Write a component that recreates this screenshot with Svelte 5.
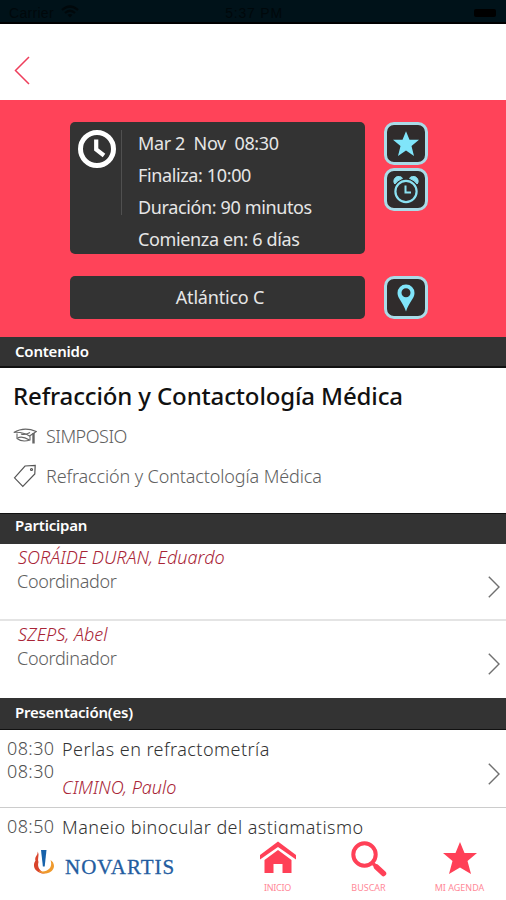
<script>
  // Session times shown next to the clock
  const schedule = ['Mar 2  Nov  08:30', 'Finaliza: 10:00', 'Duración: 90 minutos', 'Comienza en: 6 días'];
  const room = 'Atlántico C';

  const session = {
    title: 'Refracción y Contactología Médica',
    type: 'SIMPOSIO',
    topic: 'Refracción y Contactología Médica'
  };

  const people = [
    { name: 'SORÁIDE DURAN, Eduardo', role: 'Coordinador' },
    { name: 'SZEPS, Abel', role: 'Coordinador' }
  ];

  const talks = [
    { start: '08:30', end: '08:30', title: 'Perlas en refractometría', speaker: 'CIMINO, Paulo' },
    { start: '08:50', end: '', title: 'Manejo binocular del astigmatismo', speaker: '' }
  ];

  let favorite = $state(false);
</script>

{#snippet chevron()}
  <svg class="chevron" width="12" height="22" viewBox="0 0 12 22">
    <path d="M.8 .8 11 11 .8 21.2" fill="none" stroke="#707070" stroke-width="1.400" />
  </svg>
{/snippet}

<div class="app">
  <div class="status">
    <span class="carrier">
      Carrier
      <svg width="18" height="13" viewBox="0 0 18 13" fill="none" stroke="#00080b" stroke-width="2.300">
        <path d="M1 5Q9-2 17 5M4 8Q9 3.500 14 8" />
        <path d="M9 12.500 6.500 9.800Q9 8 11.500 9.800Z" fill="#00080b" stroke="none" />
      </svg>
    </span>
    <span class="clock">5:37 PM</span>
    <span class="battery"><i></i></span>
  </div>

  <header>
    <button class="back" aria-label="Volver">
      <svg width="16" height="29" viewBox="0 0 16 29">
        <path d="M15 1 1.500 14.500 15 28" fill="none" stroke="#ee3f5c" stroke-width="1.500" />
      </svg>
    </button>
  </header>

  <section class="hero">
    <div class="hero-row">
      <div class="card times">
        <svg width="38" height="38" viewBox="0 0 38 38" fill="none" stroke="#fff">
          <circle cx="19" cy="19" r="16.500" stroke-width="5" />
          <path d="M18.200 9.500V19.500L26 25.500" stroke-width="4.200" />
        </svg>
        <div class="divider"></div>
        <div class="lines">
          {#each schedule as line}
            <p>{line}</p>
          {/each}
        </div>
      </div>
      <div class="actions">
        <button class="tile" aria-label="Favorito" onclick={() => (favorite = !favorite)}>
          <svg width="26" height="26" viewBox="0 0 26 26">
            <path d="M13 .3 16.500 8.800H26L18.500 15 21 25 13 19.600 5 25 7.500 15 0 8.800H9.500Z" fill="#80e5fa" />
          </svg>
        </button>
        <button class="tile" aria-label="Alarma">
          <svg width="26" height="28" viewBox="0 0 26 28" fill="none" stroke="#8be2f2">
            <circle cx="13" cy="15.500" r="10.600" stroke-width="2.200" />
            <path d="M12.500 9.500V16.500H18" stroke-width="2" />
            <path d="M1.800 8A4.700 4.700 0 0 1 9.500 2.300Q4.500 4.300 1.800 8ZM24.200 8A4.700 4.700 0 0 0 16.500 2.300Q21.500 4.300 24.200 8Z" fill="#8be2f2" />
          </svg>
        </button>
      </div>
    </div>
    <div class="hero-row">
      <div class="card room">{room}</div>
      <button class="tile" aria-label="Ubicación">
        <svg width="18" height="28" viewBox="0 0 18 28">
          <path d="M9 .5A8.300 8.300 0 0 0 .5 9C.5 14.500 6 18 9 27.500 12 18 17.500 14.500 17.500 9A8.300 8.300 0 0 0 9 .5ZM9 4.300A4.500 4.500 0 1 1 9 13.300 4.500 4.500 0 1 1 9 4.300Z" fill="#80e5fa" fill-rule="evenodd" />
        </svg>
      </button>
    </div>
  </section>

  <h2 class="first">Contenido</h2>
  <section class="content">
    <h1>{session.title}</h1>
    <p class="type">
      <svg width="24" height="18" viewBox="0 0 24 18" fill="none" stroke="#666" stroke-width="1.100">
        <path d="M.8 5.500Q11-.8 23.300 4.500L16.500 9Q9 4.500 .8 5.500ZM4 6.500V11.500Q9 15.500 17 13V9" />
        <path d="M8 7Q12 8.500 17 5.500M4.500 11Q9 8.500 16.500 13" />
        <path d="M20.500 6V16.500" stroke-width="2.400" />
      </svg>
      <span>{session.type}</span>
    </p>
    <p class="topic">
      <svg width="24" height="24" viewBox="0 0 24 24" fill="none" stroke="#555" stroke-width="1.200">
        <path d="M1.500 13.800 12 2 22.200 1.500 21.800 10 9.800 22.500Z" />
        <circle cx="18.500" cy="5.500" r="1" />
      </svg>
      <span>{session.topic}</span>
    </p>
  </section>

  <h2 class="second">Participan</h2>
  <section>
    {#each people as person}
      <div class="person">
        <div>
          <p class="name">{person.name}</p>
          <p class="role">{person.role}</p>
        </div>
        {@render chevron()}
      </div>
    {/each}
  </section>

  <h2 class="third">Presentación(es)</h2>
  <section class="talks">
    {#each talks as talk}
      <div class="talk">
        <div class="hours">
          <p>{talk.start}</p>
          <p>{talk.end}</p>
        </div>
        <div class="info">
          <p class="title">{talk.title}</p>
          <p class="name">{talk.speaker}</p>
        </div>
        {@render chevron()}
      </div>
    {/each}
  </section>

  <footer>
    <div class="sponsor">
      <svg width="22" height="24" viewBox="0 0 22 24">
        <path d="M4.500 1.500C5.500 5 1 6.500 2.500 10.500-.5 15 .5 21 9 23.500H12C6.500 20.500 4 17 5.500 12 4 8 7 5 4.500 1.500Z" fill="#d9442c" />
        <path d="M17.500 10C22.500 13 22.500 20.500 15 23 10 24.500 7 23 5.500 20.500 9.500 22.500 13.500 21.500 16.500 18.500 18.500 16 18.500 13 17.500 10Z" fill="#ef9a2d" />
        <path d="M8 0H13.500L11.700 16.500H9.900Z" fill="#1762aa" />
      </svg>
      <span>NOVARTIS</span>
    </div>
    <nav>
      <a href="#inicio">
        <svg width="36" height="34" viewBox="0 0 36 34" fill="#ff4057">
          <path d="M18 .5 0 14V18.500L18 6 36 18.500V14Z" />
          <path d="M4.500 19 18 9 31.500 19V32H22.500V23H13.500V32H4.500Z" />
        </svg>
        <span class="inicio">INICIO</span>
      </a>
      <a href="#buscar">
        <svg width="36" height="36" viewBox="0 0 36 36" fill="none" stroke="#ff4057">
          <circle cx="13.500" cy="13.500" r="11.200" stroke-width="4" />
          <path d="M22 22.500 25 25.500" stroke-width="3.500" />
          <path d="M25.500 26 32.500 32.500" stroke-width="5.500" stroke-linecap="round" />
        </svg>
        <span>BUSCAR</span>
      </a>
      <a href="#agenda">
        <svg width="34" height="34" viewBox="0 0 34 34">
          <path d="M17 1 21.500 12H34L24.500 20 28 33 17 26.500 6 33 9.500 20 0 12H12.500Z" fill="#ff4057" />
        </svg>
        <span>MI AGENDA</span>
      </a>
    </nav>
  </footer>
</div>

<style>
  :global(body) {
    margin: 0;
    background: #fff;
  }

  .app {
    display: flex;
    flex-direction: column;
    height: 900px;
    overflow: hidden;
    background: #fff;
    font-family: "Noto Sans", sans-serif;
    font-size: 18px;
  }

  p, h1, h2 {
    margin: 0;
    white-space: pre;
  }

  button {
    padding: 0;
    border: none;
    background: none;
  }

  svg {
    display: block;
    flex: none;
  }

  .status {
    display: grid;
    grid-template-columns: 1fr auto 1fr;
    box-sizing: border-box;
    height: 24px;
    padding: 3px 10px 0 9px;
    border-bottom: 2px solid #000;
    background: #001219;
    color: #00080b;
    font: 14px/20px "Liberation Sans", sans-serif;
    letter-spacing: 0.3px;
  }

  .carrier {
    display: flex;
    gap: 7px;
  }

  .carrier svg {
    margin-top: 2px;
  }

  .clock {
    padding-left: 3px;
    letter-spacing: 0.8px;
  }

  .battery {
    justify-self: end;
    padding-top: 6px;
  }

  .battery i {
    display: block;
    width: 22px;
    height: 8px;
    border-radius: 2px;
    background: #000;
  }

  header {
    box-sizing: border-box;
    height: 76px;
    padding: 32px 14px 0;
  }

  .hero {
    display: flex;
    flex-direction: column;
    gap: 22px;
    box-sizing: border-box;
    height: 237px;
    padding: 22px 0 0 70px;
    background: #ff4359;
  }

  .hero-row {
    display: flex;
    gap: 19px;
  }

  .card {
    box-sizing: border-box;
    width: 295px;
    border-radius: 5px;
    background: #333;
    color: #e6e6e6;
  }

  .times {
    display: flex;
    height: 132px;
    padding: 8px;
  }

  .divider {
    width: 1px;
    height: 85px;
    margin: 0 16px 0 5px;
    background: #505050;
  }

  .lines {
    margin-top: -3px;
    line-height: 32px;
    letter-spacing: -0.37px;
  }

  .room {
    height: 43px;
    text-align: center;
    padding-left: 5px;
    line-height: 43px;
    letter-spacing: -0.2px;
  }

  .actions {
    display: flex;
    flex-direction: column;
    gap: 3px;
  }

  .tile {
    display: flex;
    align-items: center;
    justify-content: center;
    box-sizing: border-box;
    width: 44px;
    height: 43px;
    border: 3px solid #a9dce8;
    border-radius: 10px;
    background: #302c2c;
  }

  h2 {
    box-sizing: border-box;
    flex: none;
    padding-left: 15px;
    background: #333;
    color: #fff;
    font-size: 15px;
    font-weight: 600;
    line-height: 28px;
    letter-spacing: -0.22px;
  }

  .first {
    height: 31px;
    border-bottom: 2px solid #111;
  }

  .second {
    height: 31px;
    border-top: 1px solid #111;
    line-height: 23px;
  }

  .third {
    height: 32px;
    border-bottom: 1px solid #111;
  }

  .content {
    box-sizing: border-box;
    height: 145px;
    padding-left: 13px;
  }

  h1 {
    height: 56px;
    color: #111;
    font-size: 24px;
    font-weight: 500;
    line-height: 56px;
    letter-spacing: -0.14px;
  }

  .type, .topic {
    display: flex;
    align-items: center;
    gap: 9px;
    height: 24px;
    color: #606060;
    font-weight: 300;
    letter-spacing: -0.12px;
  }

  .type {
    height: 23px;
    letter-spacing: -0.5px;
  }

  .topic {
    margin-top: 17px;
  }

  .person {
    display: flex;
    justify-content: space-between;
    box-sizing: border-box;
    height: 77px;
    padding: 2px 6px 0 17px;
    border-bottom: 2px solid #e4e4e4;
    line-height: 23px;
  }

  .person:last-child {
    border-bottom: none;
  }

  .person .name {
    padding-left: 1px;
  }

  .person .chevron {
    margin-top: 30px;
  }

  .name {
    color: #a82436;
    font-style: italic;
    font-weight: 300;
  }

  .role {
    padding-top: 1px;
    color: #606060;
    font-weight: 300;
    letter-spacing: -0.32px;
  }

  .talks {
    height: 104px;
    overflow: hidden;
  }

  .talk {
    display: flex;
    box-sizing: border-box;
    height: 78px;
    padding: 7px 6px 0 7px;
    border-bottom: 1px solid #ccc;
    line-height: 23px;
  }

  .hours {
    width: 55px;
    color: #505050;
    font-weight: 300;
    letter-spacing: 0.4px;
  }

  .info {
    flex: 1;
    color: #333;
    font-weight: 300;
  }

  .title {
    padding-top: 1px;
    letter-spacing: 0.45px;
  }

  .info .name {
    margin-top: 15px;
  }

  .talk .chevron {
    margin-top: 26px;
  }

  footer {
    display: flex;
    height: 66px;
    background: #fff;
  }

  .sponsor {
    display: flex;
    gap: 10px;
    box-sizing: border-box;
    width: 232px;
    padding: 16px 0 0 33px;
    color: #235c9f;
    font: 21px/34px "Liberation Serif", serif;
    letter-spacing: 1px;
    -webkit-text-stroke: 0.3px #235c9f;
  }

  nav {
    display: grid;
    grid-template-columns: repeat(3, 91px);
  }

  a {
    display: flex;
    flex-direction: column;
    align-items: center;
    justify-content: space-between;
    box-sizing: border-box;
    height: 60px;
    padding-top: 7px;
    color: #ff8998;
    font-size: 9px;
    line-height: 12px;
    text-decoration: none;
  }

  .inicio {
    letter-spacing: -0.3px;
  }
</style>
